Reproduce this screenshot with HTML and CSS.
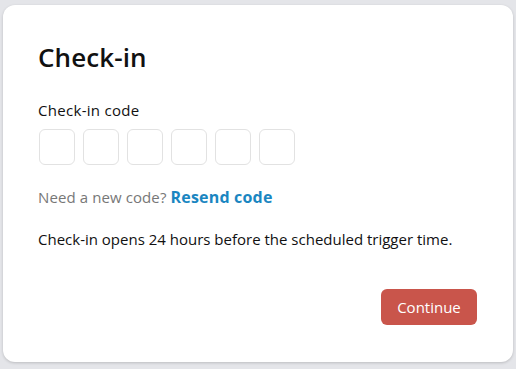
FILE: index.html
```html
<!DOCTYPE html>
<html>
<head>
<meta charset="utf-8">
<link rel="stylesheet" href="styles.css">
<title>Check-in</title>
</head>
<body>
    <div class="card">
        <h1 class="title">Check-in</h1>

        <div class="field">
            <label class="field-label">Check-in code</label>
            <div class="code-boxes">
                <input class="code-box" maxlength="1">
                <input class="code-box" maxlength="1">
                <input class="code-box" maxlength="1">
                <input class="code-box" maxlength="1">
                <input class="code-box" maxlength="1">
                <input class="code-box" maxlength="1">
            </div>
        </div>

        <p class="resend">Need a new code? <a href="#" class="resend-link">Resend code</a></p>

        <p class="note">Check-in opens 24 hours before the scheduled trigger time.</p>

        <div class="actions">
            <button class="continue-btn">Continue</button>
        </div>
    </div>
</body>
</html>
```

FILE: styles.css
```css
body {
    margin: 0;
    padding: 5px 3px;
    background: #e4e5e9;
    font-family: "Open Sans", sans-serif;
    color: #111111;
}

.card {
    background: #ffffff;
    border-radius: 12px;
    box-shadow: 0 1px 3px rgba(0, 0, 0, 0.18);
    padding: 34px 35px 35px 35px;
    height: 288px;
}

.title {
    margin: 0;
    font-size: 26px;
    font-weight: 600;
    line-height: 36px;
    letter-spacing: 0.1px;
}

.field {
    margin-top: 25px;
}

.field-label {
    display: block;
    font-size: 15px;
    line-height: 20px;
    letter-spacing: 0.3px;
}

.code-boxes {
    display: flex;
    gap: 8px;
    margin-top: 9px;
    padding-left: 1px;
}

.code-box {
    width: 36px;
    height: 36px;
    box-sizing: border-box;
    border: 1px solid #e2e2e2;
    border-radius: 6px;
    margin: 0;
    padding: 0;
}

.resend {
    margin: 21px 0 0 0;
    font-size: 15px;
    line-height: 22px;
    color: #777777;
    letter-spacing: 0.1px;
}

.resend-link {
    color: #1a86c1;
    font-weight: 700;
    font-size: 16px;
    text-decoration: none;
    letter-spacing: 0.2px;
}

.note {
    margin: 20px 0 0 0;
    font-size: 15px;
    line-height: 22px;
}

.actions {
    display: flex;
    justify-content: flex-end;
    margin-top: 39px;
    padding-right: 1px;
}

.continue-btn {
    width: 96px;
    height: 36px;
    border: none;
    border-radius: 6px;
    background: #c9554b;
    color: #ffffff;
    font-family: "Open Sans", sans-serif;
    font-size: 15px;
}
```
